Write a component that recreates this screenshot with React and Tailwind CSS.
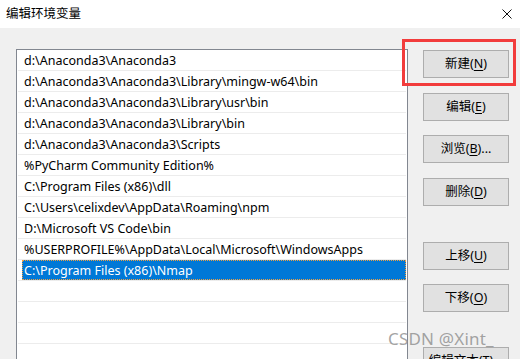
import React from 'react';

const paths = [
  'd:\\Anaconda3\\Anaconda3',
  'd:\\Anaconda3\\Anaconda3\\Library\\mingw-w64\\bin',
  'd:\\Anaconda3\\Anaconda3\\Library\\usr\\bin',
  'd:\\Anaconda3\\Anaconda3\\Library\\bin',
  'd:\\Anaconda3\\Anaconda3\\Scripts',
  '%PyCharm Community Edition%',
  'C:\\Program Files (x86)\\dll',
  'C:\\Users\\celixdev\\AppData\\Roaming\\npm',
  'D:\\Microsoft VS Code\\bin',
  '%USERPROFILE%\\AppData\\Local\\Microsoft\\WindowsApps',
  'C:\\Program Files (x86)\\Nmap',
  '',
  '',
  '',
  '',
];

const font = "font-['Noto_Sans','Noto_Sans_CJK_SC',sans-serif]";

function Btn({ label, hotkey, suffix = '', className = '' }) {
  return (
    <button
      className={`w-[86px] h-[28px] bg-[#e1e1e1] border border-[#adadad] text-[12.5px] text-black leading-none flex items-center justify-center ${className}`}
    >
      {label}(<span className="underline underline-offset-2">{hotkey}</span>){suffix}
    </button>
  );
}

export default function App() {
  return (
    <div className={`relative w-[520px] h-[359px] overflow-hidden bg-[#f0f0f0] ${font}`}>
      {/* Title bar */}
      <div className="h-[28px] bg-white flex items-center justify-between pl-[6px] pr-[8px]">
        <span className="text-[12.5px] text-black">编辑环境变量</span>
        <svg width="10" height="10" viewBox="0 0 10 10">
          <path d="M0.5 0.5 L9.5 9.5 M9.5 0.5 L0.5 9.5" stroke="#111" strokeWidth="1" />
        </svg>
      </div>

      <div className="flex pl-[16px] pt-[21px]">
        {/* Path list */}
        <div className="w-[392px] h-[330px] border border-[#828790] bg-white px-[1px]">
          {paths.map((p, i) =>
            i === 10 ? (
              <div key={i} className="h-[21px] border-b border-[#ececec] pl-[4px]">
                <div className="h-[20px] bg-[#0078d7] text-white text-[12.5px] leading-[21px] pl-[2px] outline-1 outline-dotted outline-[#f0a040] -outline-offset-1">
                  {p}
                </div>
              </div>
            ) : (
              <div
                key={i}
                className="h-[21px] border-b border-[#ececec] pl-[6px] text-[12.5px] leading-[21px] text-black whitespace-nowrap overflow-hidden"
              >
                {p}
              </div>
            )
          )}
        </div>

        {/* Buttons */}
        <div className="ml-[15px] pt-[1px] flex flex-col">
          <div className="relative">
            <Btn label="新建" hotkey="N" />
            <div className="absolute -left-[21px] -top-[11px] w-[114px] h-[47px] border-[3px] border-[#f23c3c]" />
          </div>
          <Btn label="编辑" hotkey="E" className="mt-[15px]" />
          <Btn label="浏览" hotkey="B" suffix="..." className="mt-[14px]" />
          <Btn label="删除" hotkey="D" className="mt-[15px]" />
          <Btn label="上移" hotkey="U" className="mt-[36px]" />
          <Btn label="下移" hotkey="O" className="mt-[14px]" />
          <Btn label="编辑文本" hotkey="T" suffix="..." className="mt-[35px]" />
        </div>
      </div>

      {/* Watermark */}
      <div className="absolute left-[388px] top-[326px] text-[17px] text-[#8c8c8c]/80 tracking-[0.2px]">
        CSDN @Xint_
      </div>
    </div>
  );
}
